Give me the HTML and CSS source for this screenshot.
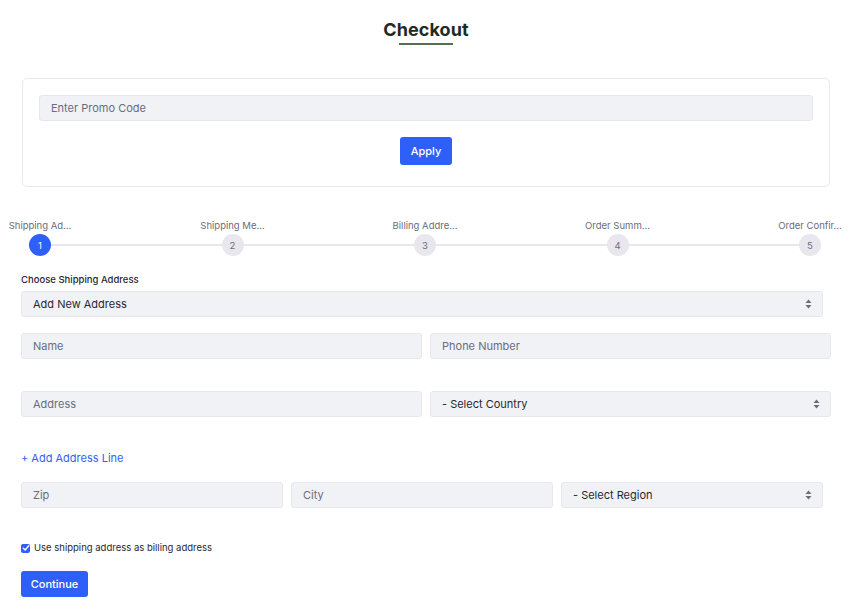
FILE: index.html
```html
<!DOCTYPE html>
<html lang="en">
<head>
<meta charset="utf-8">
<title>Checkout</title>
<link rel="stylesheet" href="styles.css">
</head>
<body>
<div class="page">
  <header class="header">
    <h1 class="title">Checkout</h1>
    <div class="title-rule"></div>
  </header>

  <section class="promo-card">
    <div class="field promo-field"><span class="placeholder">Enter Promo Code</span></div>
    <div class="promo-actions"><button class="btn btn-apply">Apply</button></div>
  </section>

  <ol class="stepper">
    <li class="step active"><span class="step-label">Shipping Ad...</span><span class="step-dot">1</span></li>
    <li class="step"><span class="step-label">Shipping Me...</span><span class="step-dot">2</span></li>
    <li class="step"><span class="step-label">Billing Addre...</span><span class="step-dot">3</span></li>
    <li class="step"><span class="step-label">Order Summ...</span><span class="step-dot">4</span></li>
    <li class="step"><span class="step-label">Order Confir...</span><span class="step-dot">5</span></li>
  </ol>

  <form class="form">
    <label class="form-label">Choose Shipping Address</label>
    <div class="field select narrow"><span class="value">Add New Address</span>
      <svg class="caret" width="7" height="10" viewBox="0 0 7 10"><path d="M3.5 0.5 L6.5 4 H0.5 Z M3.5 9.5 L6.5 6 H0.5 Z" fill="#6b6c7e"/></svg>
    </div>

    <div class="row two row-name">
      <div class="field"><span class="placeholder">Name</span></div>
      <div class="field"><span class="placeholder">Phone Number</span></div>
    </div>

    <div class="row two row-address">
      <div class="field"><span class="placeholder">Address</span></div>
      <div class="field select"><span class="value">- Select Country</span>
        <svg class="caret" width="7" height="10" viewBox="0 0 7 10"><path d="M3.5 0.5 L6.5 4 H0.5 Z M3.5 9.5 L6.5 6 H0.5 Z" fill="#6b6c7e"/></svg>
      </div>
    </div>

    <a class="add-line" href="#">+ Add Address Line</a>

    <div class="row three narrow">
      <div class="field"><span class="placeholder">Zip</span></div>
      <div class="field"><span class="placeholder">City</span></div>
      <div class="field select"><span class="value">- Select Region</span>
        <svg class="caret" width="7" height="10" viewBox="0 0 7 10"><path d="M3.5 0.5 L6.5 4 H0.5 Z M3.5 9.5 L6.5 6 H0.5 Z" fill="#6b6c7e"/></svg>
      </div>
    </div>

    <label class="check">
      <span class="check-box"><svg width="8" height="8" viewBox="0 0 8 8"><path d="M1.3 4.2 L3.2 6 L6.7 1.8" fill="none" stroke="#fff" stroke-width="1.4" stroke-linecap="round" stroke-linejoin="round"/></svg></span>
      <span class="check-text">Use shipping address as billing address</span>
    </label>

    <button class="btn btn-continue" type="button">Continue</button>
  </form>
</div>
</body>
</html>
```

FILE: styles.css
```css
* { box-sizing: border-box; }
html, body { margin: 0; padding: 0; background: #fff; }
body {
  font-family: Inter, "Noto Sans", "Liberation Sans", sans-serif;
  color: #272833;
  -webkit-font-smoothing: antialiased;
}
.page {
  width: 855px;
  padding: 18px 24px 0 21px;
}
.header {
  display: flex;
  flex-direction: column;
  align-items: center;
}
.title {
  margin: 0;
  font-size: 18px;
  line-height: 24px;
  font-weight: 700;
  color: #1f2a25;
  letter-spacing: 0.1px;
}
.title-rule {
  width: 54px;
  height: 2px;
  background: #56704f;
  margin-top: 1px;
}
.promo-card {
  margin: 33px 1px 0 1px;
  border: 1px solid #e9e9ef;
  border-radius: 5px;
  padding: 16px 16px 21px;
}
.field {
  height: 26px;
  background: #f1f2f5;
  border: 1px solid #e7e7ed;
  border-radius: 3px;
  display: flex;
  align-items: center;
  padding: 0 11px;
  font-size: 11px;
}
.placeholder { color: #6b6c7e; }
.value { color: #272833; }
.select { justify-content: space-between; padding-right: 10px; }
.caret { display: block; }
.promo-actions {
  display: flex;
  justify-content: center;
  margin-top: 16px;
}
.btn {
  border: 0;
  background: #2e5ff8;
  color: #fff;
  font-family: inherit;
  font-size: 11px;
  font-weight: 500;
  border-radius: 3px;
  padding: 0;
  cursor: pointer;
}
.btn-apply { width: 52px; height: 28px; }
.stepper {
  list-style: none;
  padding: 0;
  margin: 32px -11px 0 -13px;
  display: flex;
  justify-content: space-between;
  position: relative;
}
.stepper::before {
  content: "";
  position: absolute;
  left: 32px;
  right: 32px;
  top: 25px;
  height: 2px;
  background: #e7e7ed;
}
.step {
  width: 64px;
  display: flex;
  flex-direction: column;
  align-items: center;
  position: relative;
}
.step-label {
  font-size: 9.5px;
  line-height: 14px;
  color: #6b6c7e;
  white-space: nowrap;
}
.step-dot {
  margin-top: 1px;
  width: 22px;
  height: 22px;
  border-radius: 50%;
  background: #e7e7ed;
  color: #6b6c7e;
  font-size: 9.5px;
  display: flex;
  align-items: center;
  justify-content: center;
  position: relative;
}
.step.active .step-dot { background: #2e5ff8; color: #fff; }
.form { display: flex; flex-direction: column; }
.form-label {
  margin-top: 18px;
  font-size: 9.5px;
  line-height: 12px;
  font-weight: 500;
  color: #272833;
  margin-bottom: 5px;
}
.narrow { width: 802px; }
.row { display: grid; gap: 8px; }
.two { grid-template-columns: 1fr 1fr; }
.three { grid-template-columns: 1fr 1fr 1fr; }
.row-name { margin-top: 16px; }
.row-address { margin-top: 32px; }
.add-line {
  margin-top: 34px;
  font-size: 11px;
  line-height: 14px;
  color: #2e5ff8;
  text-decoration: none;
  align-self: flex-start;
}
.three { margin-top: 17px; }
.check {
  margin-top: 34px;
  display: flex;
  align-items: center;
  gap: 4px;
  font-size: 9.5px;
  line-height: 12px;
  color: #272833;
}
.check-box {
  width: 9px;
  height: 9px;
  border-radius: 2px;
  background: #2e5ff8;
  display: flex;
  align-items: center;
  justify-content: center;
}
.check-box svg { display: block; }
.btn-continue {
  margin-top: 17px;
  width: 67px;
  height: 26px;
  font-size: 11px;
}
```
